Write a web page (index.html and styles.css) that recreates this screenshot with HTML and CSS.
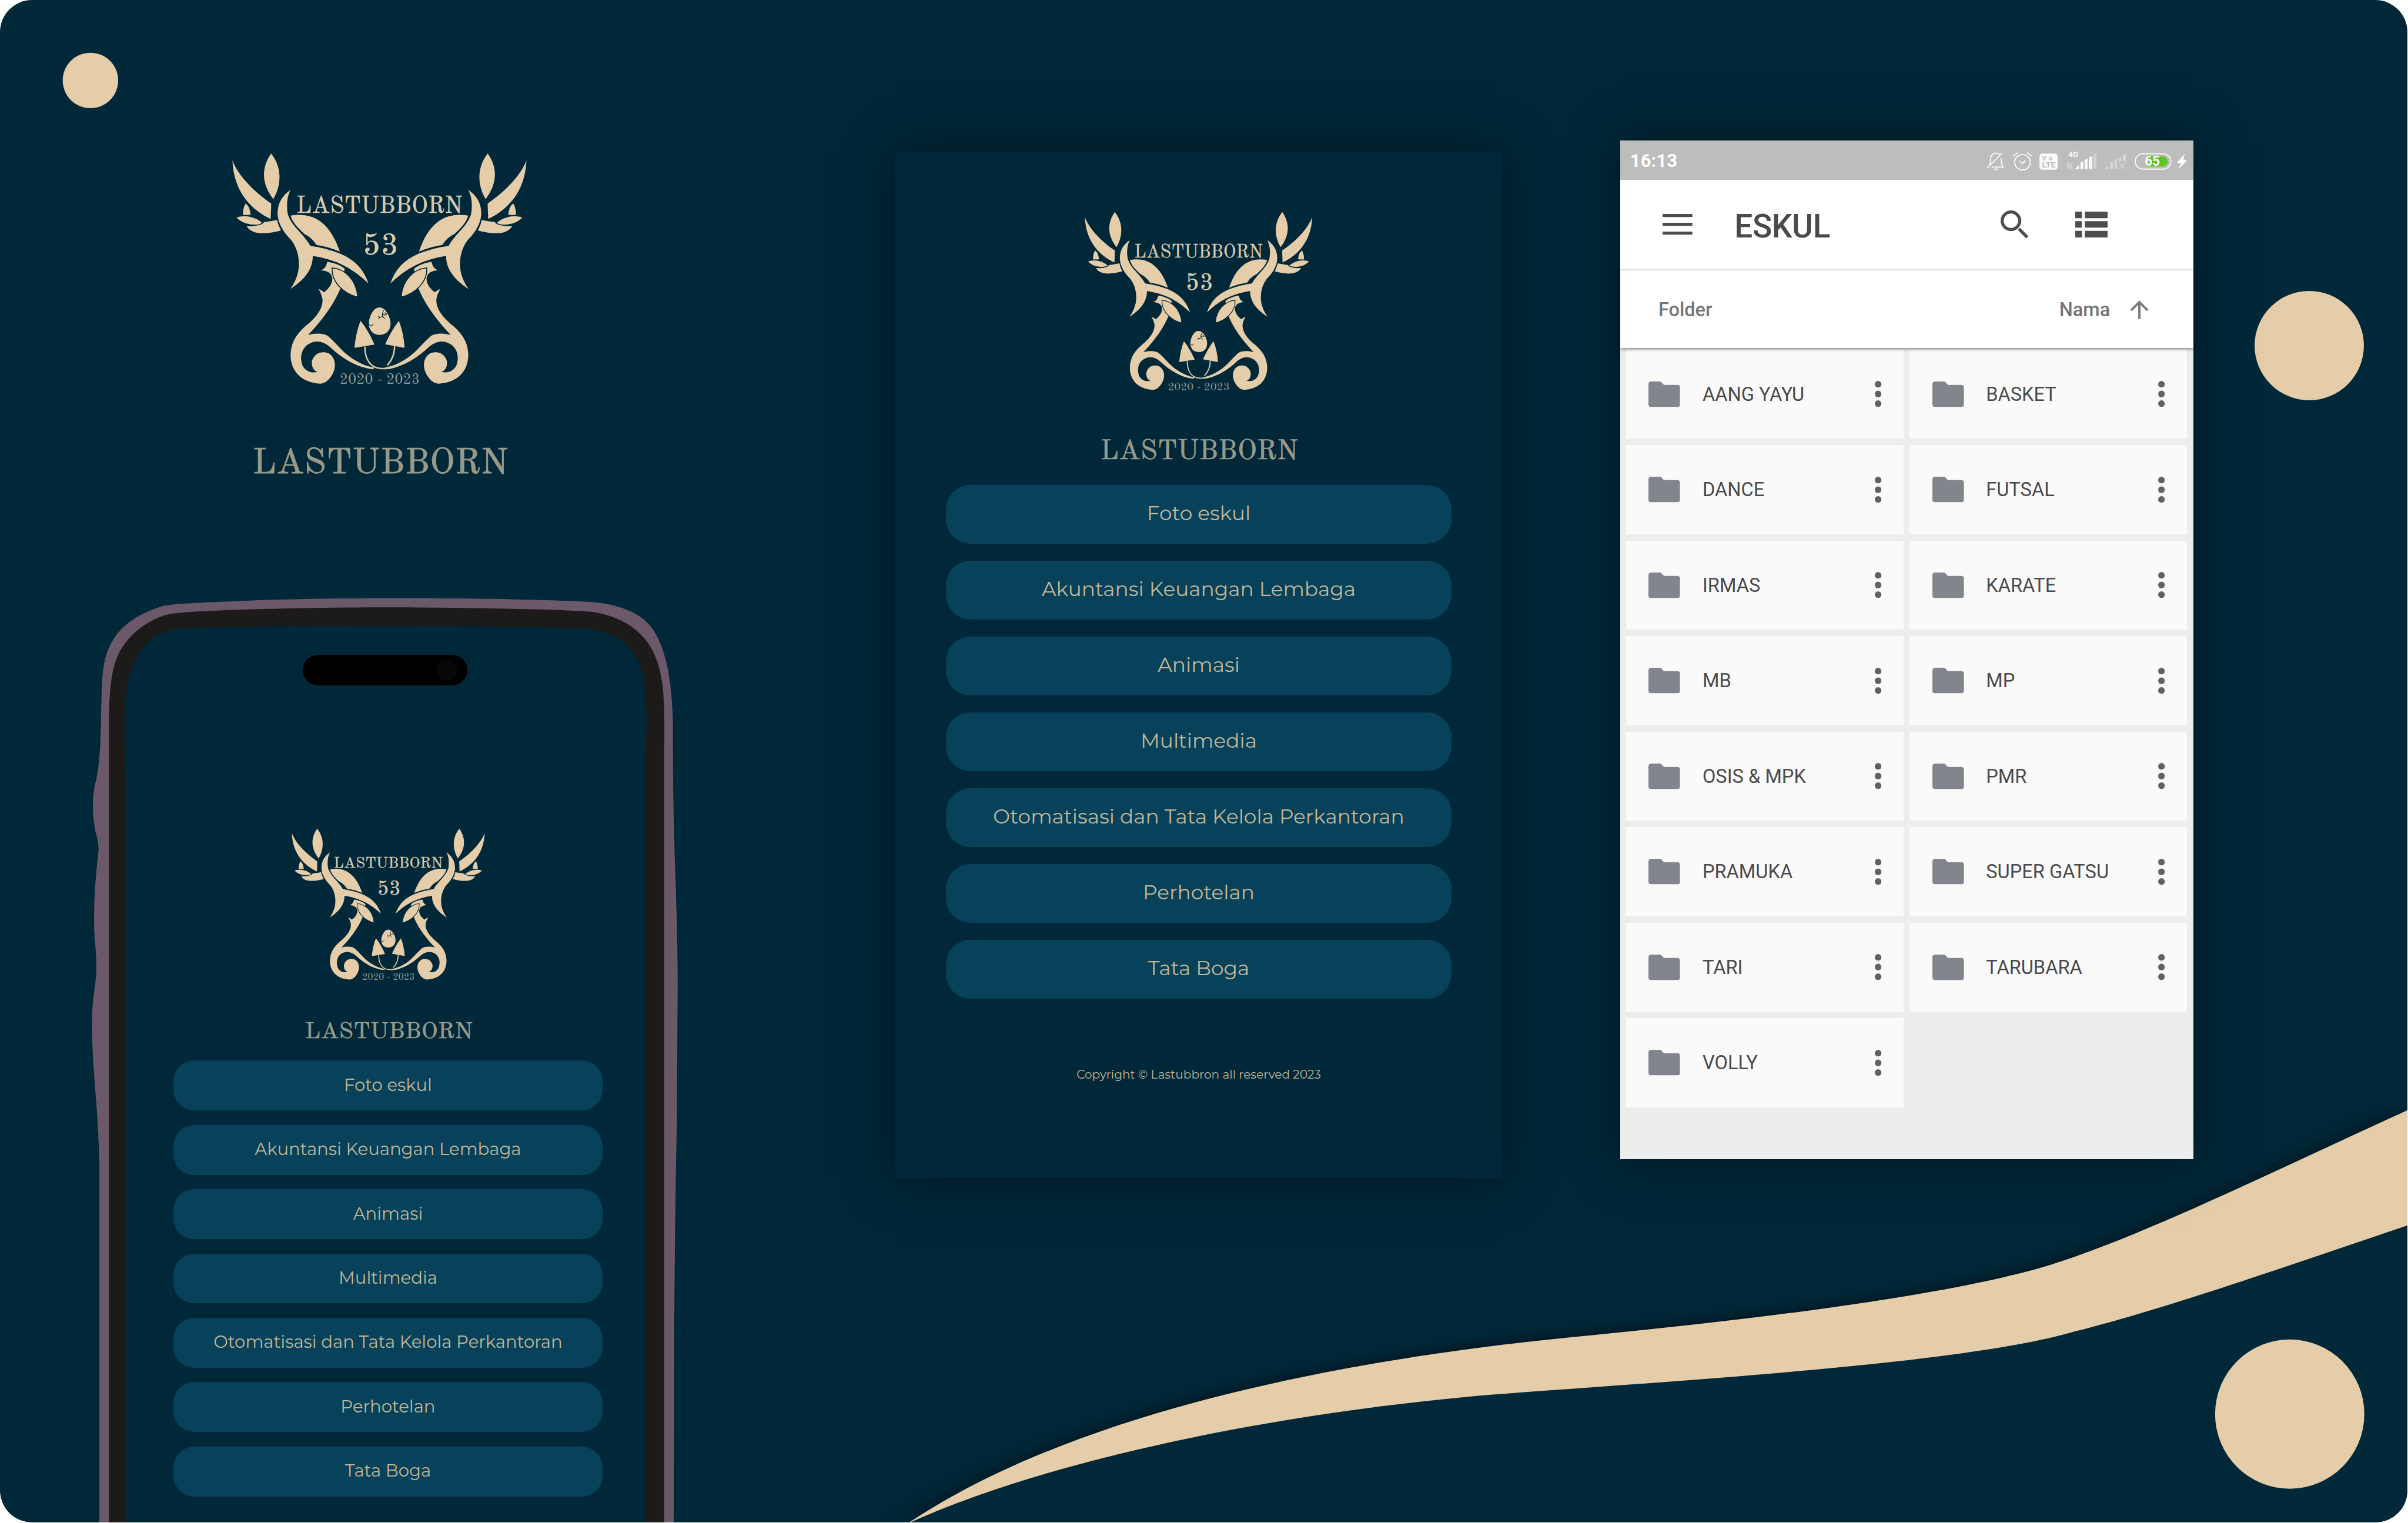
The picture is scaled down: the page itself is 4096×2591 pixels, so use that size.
FILE: index.html
```html
<!DOCTYPE html>
<html lang="id">
<head>
<meta charset="utf-8">
<title>Lastubborn</title>
<link rel="stylesheet" href="styles.css">
</head>
<body>
<svg class="defs" width="0" height="0">
  <defs>
    <g id="antler">
      <path d="M55 88C90 180 180 262 265 322L262 405C170 362 62 270 55 88Z"/>
      <path d="M264 52C320 120 325 215 276 298C212 215 210 130 264 52Z"/>
      <path d="M127 322C146 336 152 362 153 383L112 384C112 355 117 335 127 322Z"/>
      <path d="M132 444C160 448 205 442 227 422C250 420 275 415 297 411C300 430 308 450 318 467C250 485 165 498 132 444Z"/>
      <path class="cut" d="M72 397C120 378 180 390 220 427C190 445 120 447 72 397Z"/>
      <path d="M370 387C470 370 575 400 636 582C595 565 550 552 510 546C490 515 470 500 445 487C410 455 380 425 370 387Z"/>
      <g transform="translate(300 510)">
        <path d="M268 127C300 130 340 145 362 164L360 178C340 180 305 200 320 235L340 270C310 340 270 400 220 460C200 485 180 505 165 522C205 512 245 512 270 527C310 560 350 615 400 648C440 675 480 692 520 699L518 708C420 700 340 640 290 595C255 560 215 550 180 565C130 585 115 640 135 690C155 725 190 730 215 722C190 715 183 690 185 665C195 625 235 605 275 622C315 645 320 700 290 745C270 775 250 785 230 786C120 780 65 710 70 620C75 560 100 520 150 475C220 420 245 370 242 330C238 305 230 290 220 274C235 280 245 288 250 292C275 275 297 245 295 215C290 185 265 175 230 172C250 168 262 155 268 127Z"/>
        <path class="cut" d="M294 160C360 165 425 220 433 318C360 300 290 240 294 160Z"/>
      </g>
      <path class="cut" d="M377 240C320 275 295 320 297 380C300 430 325 475 370 520C400 560 412 600 412 650C412 700 395 745 358 794C430 750 492 690 492 608C600 625 700 665 797 764C765 665 710 622 637 590C585 570 530 555 478 549C440 480 380 450 357 380C348 325 355 275 377 240Z"/>
    </g>
    <symbol id="emblem" viewBox="0 0 1700 1900">
      <g class="tan">
        <use href="#antler"/>
        <use href="#antler" transform="translate(1700 0) scale(-1 1)"/>
        <path d="M850 884C885 884 910 938 910 972C910 1010 885 1032 852 1032C818 1032 793 1010 793 970C793 938 815 884 850 884Z"/>
        <path d="M748 956C775 990 805 1040 823 1085L715 1102C720 1050 730 1000 748 956Z"/>
        <path d="M955 956C972 1000 983 1050 986 1102L881 1083C900 1040 925 995 955 956Z"/>
      </g>
      <path class="stem" d="M771 1095C772 1165 800 1212 860 1214C890 1216 930 1212 965 1190M932 1093C932 1130 918 1170 892 1197"/>
      <path class="crack" d="M845 947L851 937L843 930M851 937L868 933L878 944M868 933L866 920L878 925L888 920M866 920L872 898M878 912L893 922M795 976Q803 992 817 974"/>
      <g class="word">
        <text x="400" y="372" font-size="128" textLength="900" lengthAdjust="spacingAndGlyphs">LASTUBBORN</text>
        <text x="760 858" y="598" font-size="164">53</text>
        <text class="years" x="635" y="1298" font-size="78" textLength="433" lengthAdjust="spacing">2020 - 2023</text>
        <text class="name" x="163" y="1780" font-size="188" textLength="1384" lengthAdjust="spacingAndGlyphs">LASTUBBORN</text>
      </g>
    </symbol>
    <symbol id="folder" viewBox="0 0 57 46"><path d="M5 0H22L28 6H52Q57 6 57 11V41Q57 46 52 46H5Q0 46 0 41V5Q0 0 5 0Z"/></symbol>
    <symbol id="more" viewBox="0 0 12 47"><circle cx="6" cy="6" r="6"/><circle cx="6" cy="23.5" r="6"/><circle cx="6" cy="41" r="6"/></symbol>
  </defs>
</svg>

<main class="stage">
  <svg class="backdrop" viewBox="0 0 4340 2745" preserveAspectRatio="none">
    <circle cx="163" cy="145" r="50"/>
    <circle cx="4162" cy="623" r="98.5"/>
    <g transform="translate(1600 1950) scale(1.74745 .50702)">
      <path class="ground" d="M22 1568C165 1235 400 1020 680 917C860 857 1060 780 1180 670C1270 587 1410 350 1568 100V1568Z"/>
      <path d="M20 1572C165 1235 400 1020 680 917C860 857 1060 780 1180 670C1270 587 1410 350 1568 100V510C1440 660 1310 815 1225 887C1130 985 900 1045 650 1105C400 1170 160 1350 20 1572Z"/>
    </g>
    <circle cx="4126.800" cy="2549" r="134.500"/>
  </svg>

  <section class="brand">
    <svg class="brand-logo"><use href="#emblem"/></svg>
    <div class="phone">
      <svg class="phone-frame" viewBox="0 0 1568 2953" preserveAspectRatio="none">
        <path class="case" d="M55 2953V1821C52 1700 48 1650 45 1600C38 1480 32 1390 40 1300C48 1240 50 1200 43 1120C38 1000 48 900 53 840C52 800 45 790 42 760C36 700 38 660 47 620C60 540 58 450 60 380C62 300 62 240 85 190C110 130 160 95 212 75C240 66 300 64 450 56C600 48 950 48 1100 53C1200 56 1290 58 1330 66C1420 88 1450 130 1470 190C1490 250 1500 330 1502 440C1502 600 1503 700 1507 870C1512 1050 1515 1180 1514 1300L1512 1700C1509 1900 1506 2000 1504 2953Z"/>
        <path class="bezel" d="M79 2953V440C80 300 90 240 120 190C150 140 200 105 238 98C300 85 600 78 780 78C950 78 1250 84 1305 93C1400 115 1450 180 1468 270C1480 330 1482 400 1480 530V2953Z"/>
        <path class="glass" d="M122 2953V600C118 480 118 400 123 350C130 280 150 215 185 180C205 160 235 148 250 146C350 137 600 136 800 136C1000 136 1250 141 1290 146C1360 158 1400 200 1418 255C1435 310 1437 400 1435 480L1433 600V2953Z"/>
      </svg>
      <div class="island"><i class="camera"></i></div>
      <div class="links">
        <svg class="logo"><use href="#emblem"/></svg>
        <a class="link">Foto eskul</a>
        <a class="link">Akuntansi Keuangan Lembaga</a>
        <a class="link">Animasi</a>
        <a class="link">Multimedia</a>
        <a class="link">Otomatisasi dan Tata Kelola Perkantoran</a>
        <a class="link">Perhotelan</a>
        <a class="link">Tata Boga</a>
      </div>
    </div>
  </section>

  <section class="panel">
    <div class="links">
      <svg class="logo"><use href="#emblem"/></svg>
      <a class="link">Foto eskul</a>
      <a class="link">Akuntansi Keuangan Lembaga</a>
      <a class="link">Animasi</a>
      <a class="link">Multimedia</a>
      <a class="link">Otomatisasi dan Tata Kelola Perkantoran</a>
      <a class="link">Perhotelan</a>
      <a class="link">Tata Boga</a>
    </div>
    <p class="copyright">Copyright © Lastubbron all reserved 2023</p>
  </section>

  <section class="files">
    <header class="status">
      <span>16:13</span>
      <svg class="status-icons" viewBox="55 265 1100 120">
        <g class="line">
          <path d="M80 345C84 325 82 315 84 305C90 288 104 281 116 283C124 284 130 288 134 292M141 310C142 330 140 345 152 358H90M102 367Q113 375 124 367M65 363L145 283"/>
          <circle cx="256" cy="332" r="42"/>
          <path d="M206 299L232 279M306 299L280 279M240 325L256 339L273 323"/>
          <rect x="866" y="286" width="192" height="83" rx="41"/>
        </g>
        <rect class="solid" x="348" y="285" width="98" height="87" rx="15"/>
        <text class="volte" x="362" y="322" font-size="36" textLength="56">Vo</text>
        <text class="volte" x="362" y="360" font-size="38" textLength="73" lengthAdjust="spacingAndGlyphs">LTE</text>
        <text class="solid" x="504" y="304" font-size="39" textLength="54" lengthAdjust="spacingAndGlyphs">4G</text>
        <path class="solid" d="M538 368L562 346V368ZM569 368V335L585 325V368ZM592 368V320L608 311V368ZM616 368V307L633 297V368Z"/>
        <path class="dim" d="M640 368V292L656 283V368ZM697 368L720 346V368ZM729 368V333L745 325V368ZM753 368V320L768 310V368ZM776 326V309L791 300V326ZM799 326V291L815 283V326Z"/>
        <path class="dim-line" d="M504 366V335L496 345M504 335L504 366L496 358M520 335V366L528 356M514 345V366M780 335L812 367M812 335L780 367"/>
        <path class="charge" d="M940 299H1012A30 28 0 0 1 1012 355H925Q950 335 930 316Z"/>
        <text class="solid" x="917" y="352" font-size="74" textLength="82" lengthAdjust="spacingAndGlyphs">65</text>
        <path class="solid" d="M1136 284L1091 333L1113 337L1099 371L1146 322L1125 316Z"/>
      </svg>
    </header>
    <div class="toolbar">
      <svg class="menu-icon" viewBox="0 0 54 38"><path d="M0 0H54V5.500H0ZM0 16H54V21.500H0ZM0 32H54V37.500H0Z"/></svg>
      <h1>ESKUL</h1>
      <svg class="search-icon" viewBox="137 597 150 150"><circle cx="193" cy="653" r="47.500"/><path d="M236 697L281 742"/></svg>
      <svg class="list-icon" viewBox="541 605 175 141"><path d="M541 605H577V641H541ZM593 605H716V641H593ZM541 657H577V692H541ZM593 657H716V692H593ZM541 709H577V745H541ZM593 709H716V745H593Z"/></svg>
    </div>
    <div class="sort">
      <span>Folder</span>
      <span class="by">Nama</span>
      <svg class="arrow-icon" viewBox="0 0 34 34"><path d="M17 34V3M2 18L17 3L32 18"/></svg>
    </div>
    <div class="grid">
      <div class="card"><svg class="folder"><use href="#folder"/></svg><span>AANG YAYU</span><svg class="more"><use href="#more"/></svg></div>
      <div class="card"><svg class="folder"><use href="#folder"/></svg><span>BASKET</span><svg class="more"><use href="#more"/></svg></div>
      <div class="card"><svg class="folder"><use href="#folder"/></svg><span>DANCE</span><svg class="more"><use href="#more"/></svg></div>
      <div class="card"><svg class="folder"><use href="#folder"/></svg><span>FUTSAL</span><svg class="more"><use href="#more"/></svg></div>
      <div class="card"><svg class="folder"><use href="#folder"/></svg><span>IRMAS</span><svg class="more"><use href="#more"/></svg></div>
      <div class="card"><svg class="folder"><use href="#folder"/></svg><span>KARATE</span><svg class="more"><use href="#more"/></svg></div>
      <div class="card"><svg class="folder"><use href="#folder"/></svg><span>MB</span><svg class="more"><use href="#more"/></svg></div>
      <div class="card"><svg class="folder"><use href="#folder"/></svg><span>MP</span><svg class="more"><use href="#more"/></svg></div>
      <div class="card"><svg class="folder"><use href="#folder"/></svg><span>OSIS &amp; MPK</span><svg class="more"><use href="#more"/></svg></div>
      <div class="card"><svg class="folder"><use href="#folder"/></svg><span>PMR</span><svg class="more"><use href="#more"/></svg></div>
      <div class="card"><svg class="folder"><use href="#folder"/></svg><span>PRAMUKA</span><svg class="more"><use href="#more"/></svg></div>
      <div class="card"><svg class="folder"><use href="#folder"/></svg><span>SUPER GATSU</span><svg class="more"><use href="#more"/></svg></div>
      <div class="card"><svg class="folder"><use href="#folder"/></svg><span>TARI</span><svg class="more"><use href="#more"/></svg></div>
      <div class="card"><svg class="folder"><use href="#folder"/></svg><span>TARUBARA</span><svg class="more"><use href="#more"/></svg></div>
      <div class="card"><svg class="folder"><use href="#folder"/></svg><span>VOLLY</span><svg class="more"><use href="#more"/></svg></div>
    </div>
  </section>
</main>
</body>
</html>
```
FILE: styles.css
```css
/* 1rem is one hundredth of the 43.4-unit wide board */
html { font-size: calc(100vw / 43.4); background: #fff; }
body { margin: 0; overflow: hidden; }
* { box-sizing: border-box; }
svg { display: block; flex: none; overflow: visible; }
.defs { position: absolute; }

.stage {
  position: relative;
  display: grid;
  grid-template-columns: 16.14rem 10.93rem 12.46rem;
  align-items: start;
  width: 43.39rem;
  height: 27.44rem;
  border-radius: .58rem;
  background: #012839;
  overflow: hidden;
}
.backdrop { position: absolute; left: 0; top: 0; width: 43.4rem; height: 27.45rem; fill: #e5cdaa; }
.ground { fill: #012839; filter: drop-shadow(0 -16px 16px rgba(0, 0, 0, .42)); }

/* emblem */
.tan { fill: #e5cdaa; }
.cut { stroke: #012839; stroke-width: 5; }
.stem { fill: none; stroke: #d9c8a8; stroke-width: 8; }
.crack { fill: none; stroke: #012839; stroke-width: 4; }
.word { font-family: "Old Standard TT", "Libre Bodoni", "Bodoni Moda", "Liberation Serif", serif; fill: #d8cbb0; stroke: #d8cbb0; stroke-width: 1.5; }
.word .years { fill: #8b9a91; stroke: none; }
.word .name { fill: #979a8a; stroke: #979a8a; stroke-width: 2.5; }

/* left column */
.brand { position: relative; padding-top: 2.6rem; }
.brand-logo { width: 5.667rem; height: 6.333rem; margin-left: 4rem; }
.phone { position: relative; width: 11.2rem; height: 16.95rem; margin: 1.567rem 0 0 1.4rem; padding-top: 1.3rem; }
.phone-frame { position: absolute; inset: 0; width: 100%; height: 100%; }
.case { fill: #6b5969; }
.bezel { fill: #1c1b19; }
.glass { fill: #012839; }
.island { position: relative; display: flex; align-items: center; justify-content: flex-end; width: 2.965rem; height: .557rem; margin-left: 4.057rem; padding-right: .18rem; border-radius: .28rem; background: #000; }
.camera { width: .38rem; height: .38rem; border-radius: 50%; background: #060708; }
.phone .links { position: relative; font-size: .8486rem; width: 7.728rem; margin: 2.47rem 0 0 1.729rem; }

/* link list, sized in em so it scales with its holder */
.links { display: flex; flex-direction: column; align-items: stretch; }
.logo { width: 4.38em; height: 4.896em; margin: 0 auto .162em; }
.link {
  display: flex; align-items: center; justify-content: center;
  height: 2.912em; margin-bottom: .841em; padding-bottom: .1em;
  border-radius: 1.21em;
  background: #07425a; color: #c3b698;
  font: 400 .364em/1 Montserrat, Inter, sans-serif;
  white-space: nowrap;
}

.panel { position: relative; height: 18.5rem; margin-top: 2.737rem; padding: .95rem .91rem 0; background: #012839; box-shadow: 0 0 .85rem rgba(0, 0, 0, .5); }
.panel .links { font-size: 1rem; }
.copyright { margin: .935rem 0 0; text-align: center; font: 400 .2135rem/1.2 Montserrat, Inter, sans-serif; color: #c3b698; white-space: nowrap; }

/* file manager */
.files { position: relative; display: flex; flex-direction: column; width: 10.33rem; height: 18.36rem; margin: 2.53rem 0 0 2.13rem; background: #ededed; box-shadow: 0 0 .85rem rgba(0, 0, 0, .5); font-family: Roboto, sans-serif; }
.status { display: flex; align-items: center; justify-content: space-between; height: .714rem; padding: .03rem .08rem 0 .18rem; background: #bdbdbd; color: #fff; font-size: .33rem; font-weight: 700; }
.status-icons { width: 3.667rem; height: .4rem; }
.line { fill: none; stroke: #fafafa; stroke-width: 6; }
.solid { fill: #fafafa; font-weight: 700; }
.volte { fill: #bdbdbd; font-weight: 700; }
.dim { fill: #d4d4d4; }
.dim-line { fill: none; stroke: #d4d4d4; stroke-width: 6; }
.charge { fill: #5ec523; }
.toolbar { display: flex; align-items: center; height: 1.63rem; padding: 0 1.545rem 0 .764rem; background: #fff; border-bottom: .03rem solid #ebebeb; fill: #4d4d4a; }
.menu-icon { width: .537rem; height: .378rem; }
h1 { flex: 1; margin: .08rem 0 0 .76rem; color: #4a4a4a; font-size: .582rem; line-height: 1; font-weight: 500; letter-spacing: -.004rem; }
.search-icon { width: .5rem; height: .5rem; margin-right: .846rem; fill: none; stroke: #4d4d4a; stroke-width: 17; }
.list-icon { width: .583rem; height: .47rem; }
.sort { position: relative; display: flex; align-items: center; height: 1.395rem; padding: .02rem .8rem 0 .69rem; background: #fff; color: #757575; font-size: .345rem; font-weight: 500; box-shadow: 0 .02rem .06rem rgba(0, 0, 0, .5); }
.by { margin-left: auto; }
.arrow-icon { width: .34rem; height: .34rem; margin-left: .36rem; fill: none; stroke: #757575; stroke-width: 4; }
.grid { display: grid; grid-template-columns: 5rem 5rem; column-gap: .11rem; row-gap: .12rem; padding: .035rem .11rem; }
.card { display: flex; align-items: center; height: 1.602rem; padding: 0 .4rem 0 .405rem; background: #fafafa; color: #4a4a4a; font-size: .3455rem; }
.card span { flex: 1; padding-left: .4rem; }
.folder { width: .57rem; height: .46rem; fill: #82868c; }
.more { width: .12rem; height: .47rem; fill: #616161; }
```
